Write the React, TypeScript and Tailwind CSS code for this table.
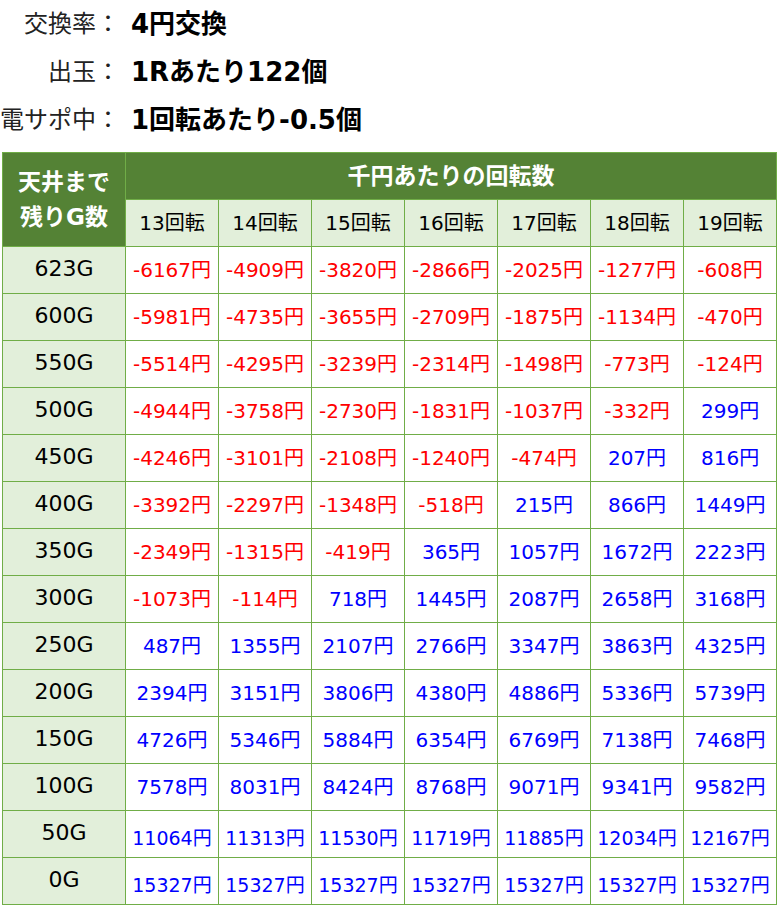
const spins = [13, 14, 15, 16, 17, 18, 19];

const rows: { label: string; values: number[] }[] = [
  { label: "623G", values: [-6167, -4909, -3820, -2866, -2025, -1277, -608] },
  { label: "600G", values: [-5981, -4735, -3655, -2709, -1875, -1134, -470] },
  { label: "550G", values: [-5514, -4295, -3239, -2314, -1498, -773, -124] },
  { label: "500G", values: [-4944, -3758, -2730, -1831, -1037, -332, 299] },
  { label: "450G", values: [-4246, -3101, -2108, -1240, -474, 207, 816] },
  { label: "400G", values: [-3392, -2297, -1348, -518, 215, 866, 1449] },
  { label: "350G", values: [-2349, -1315, -419, 365, 1057, 1672, 2223] },
  { label: "300G", values: [-1073, -114, 718, 1445, 2087, 2658, 3168] },
  { label: "250G", values: [487, 1355, 2107, 2766, 3347, 3863, 4325] },
  { label: "200G", values: [2394, 3151, 3806, 4380, 4886, 5336, 5739] },
  { label: "150G", values: [4726, 5346, 5884, 6354, 6769, 7138, 7468] },
  { label: "100G", values: [7578, 8031, 8424, 8768, 9071, 9341, 9582] },
  { label: "50G", values: [11064, 11313, 11530, 11719, 11885, 12034, 12167] },
  { label: "0G", values: [15327, 15327, 15327, 15327, 15327, 15327, 15327] },
];

const specs = [
  { label: "交換率：", value: "4円交換" },
  { label: "出玉：", value: "1Rあたり122個" },
  { label: "電サポ中：", value: "1回転あたり-0.5個" },
];

function ValueCell({ value }: { value: number }) {
  const long = Math.abs(value) >= 10000;
  return (
    <td
      className={
        "border border-[#70ad47] bg-white text-center " +
        (value < 0 ? "text-[#ff0000] " : "text-[#0000ff] ") +
        (long ? "pt-2 text-[19px]" : "text-[20px]")
      }
    >
      {value}円
    </td>
  );
}

export default function App() {
  return (
    <div className="w-[777px] bg-white font-['DejaVu_Sans','Noto_Sans_CJK_JP',sans-serif] text-black">
      <div className="flex flex-col">
        {specs.map((s) => (
          <div key={s.label} className="flex h-12 items-center">
            <span className="w-[120px] text-right text-[24px] text-[#222]">{s.label}</span>
            <span className="ml-[11px] text-[26px] font-bold">{s.value}</span>
          </div>
        ))}
      </div>
      <table className="ml-[2px] mt-[8px] w-[774px] table-fixed border-collapse">
        <colgroup>
          <col className="w-[123px]" />
          {spins.map((n) => (
            <col key={n} className="w-[93px]" />
          ))}
        </colgroup>
        <thead>
          <tr className="h-[47px]">
            <th
              rowSpan={2}
              className="border border-[#70ad47] bg-[#548235] text-[23px] font-bold leading-[35px] text-white"
            >
              天井まで
              <br />
              残りG数
            </th>
            <th
              colSpan={7}
              className="border border-[#70ad47] bg-[#548235] text-[23px] font-bold text-white"
            >
              千円あたりの回転数
            </th>
          </tr>
          <tr className="h-[47px]">
            {spins.map((n) => (
              <th
                key={n}
                className="border border-[#70ad47] bg-[#e2efda] text-[20px] font-normal"
              >
                {n}回転
              </th>
            ))}
          </tr>
        </thead>
        <tbody>
          {rows.map((r) => (
            <tr key={r.label} className="h-[47px]">
              <td className="border border-[#70ad47] bg-[#e2efda] pb-1 text-center text-[22px]">
                {r.label}
              </td>
              {r.values.map((v, i) => (
                <ValueCell key={i} value={v} />
              ))}
            </tr>
          ))}
        </tbody>
      </table>
    </div>
  );
}
